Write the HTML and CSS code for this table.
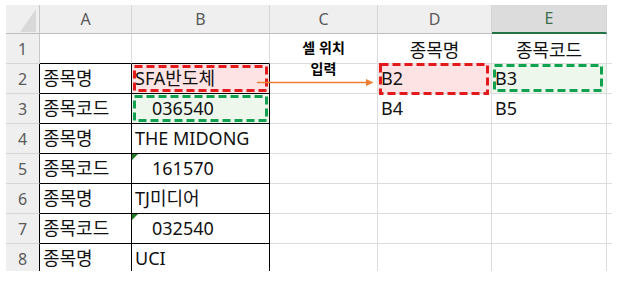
FILE: index.html
```html
<!DOCTYPE html>
<html lang="ko">
<head>
<meta charset="utf-8">
<title>Sheet</title>
<link rel="stylesheet" href="styles.css">
</head>
<body>
<div class="sheet">
  <!-- header row -->
  <div class="corner"><svg width="33" height="28" viewBox="0 0 33 28"><polygon points="30,4 14,27 30,27" fill="#d9d9d9"/></svg></div>
  <div class="hd">A</div>
  <div class="hd">B</div>
  <div class="hd">C</div>
  <div class="hd">D</div>
  <div class="hd sel">E</div>
  <div class="hdtail"></div>

  <!-- row 1 -->
  <div class="rh">1</div>
  <div class="c bt"></div>
  <div class="c bt"></div>
  <div class="c"><div class="note"><div>셀 위치</div><div>입력</div></div></div>
  <div class="c ctr">종목명</div>
  <div class="c ctr">종목코드</div>
  <div class="c tail"></div>

  <!-- row 2 -->
  <div class="rh bk">2</div>
  <div class="c bx">종목명</div>
  <div class="c bx pink">SFA반도체<svg class="dash red b2" width="135" height="27"><rect x="1.5" y="1.5" width="132" height="24"/></svg></div>
  <div class="c"></div>
  <div class="c pink">B2<svg class="dash red d2" width="110" height="32"><rect x="1.5" y="1.5" width="107" height="29"/></svg></div>
  <div class="c mint">B3<svg class="dash green e2" width="110" height="28"><rect x="1.5" y="1.5" width="107" height="25"/></svg></div>
  <div class="c tail"></div>

  <!-- row 3 -->
  <div class="rh bk">3</div>
  <div class="c bx">종목코드</div>
  <div class="c bx mint ind">036540<svg class="dash green b3" width="135" height="27"><rect x="1.5" y="1.5" width="132" height="24"/></svg></div>
  <div class="c"></div>
  <div class="c">B4</div>
  <div class="c">B5</div>
  <div class="c tail"></div>

  <!-- row 4 -->
  <div class="rh bk">4</div>
  <div class="c bx">종목명</div>
  <div class="c bx">THE MIDONG</div>
  <div class="c"></div>
  <div class="c"></div>
  <div class="c"></div>
  <div class="c tail"></div>

  <!-- row 5 -->
  <div class="rh bk">5</div>
  <div class="c bx">종목코드</div>
  <div class="c bx ind flag">161570</div>
  <div class="c"></div>
  <div class="c"></div>
  <div class="c"></div>
  <div class="c tail"></div>

  <!-- row 6 -->
  <div class="rh bk">6</div>
  <div class="c bx">종목명</div>
  <div class="c bx">TJ미디어</div>
  <div class="c"></div>
  <div class="c"></div>
  <div class="c"></div>
  <div class="c tail"></div>

  <!-- row 7 -->
  <div class="rh bk">7</div>
  <div class="c bx">종목코드</div>
  <div class="c bx ind flag">032540</div>
  <div class="c"></div>
  <div class="c"></div>
  <div class="c"></div>
  <div class="c tail"></div>

  <!-- row 8 -->
  <div class="rh bk last">8</div>
  <div class="c bx last">종목명</div>
  <div class="c bx last">UCI</div>
  <div class="c last"></div>
  <div class="c last"></div>
  <div class="c last"></div>
  <div class="c tail last"></div>

  <svg class="arrow" width="118" height="9" viewBox="0 0 118 9">
    <line x1="0" y1="4.5" x2="110" y2="4.5" stroke="#ed7d31" stroke-width="1.5"/>
    <polygon points="109,1 116.5,4.5 109,8" fill="#ed7d31"/>
  </svg>
</div>
</body>
</html>
```
FILE: styles.css
```css
html, body {
  margin: 0;
  padding: 0;
  background: #ffffff;
}

.sheet {
  position: relative;
  margin: 5px 0 0 6px;
  width: 606px;
  height: 266px;
  display: grid;
  grid-template-columns: 34px 92px 138px 108px 114px 115px 5px;
  grid-template-rows: 29px repeat(7, 30px) 27px;
  font-family: "Noto Sans", "Noto Sans CJK KR", sans-serif;
  font-size: 18px;
  color: #111111;
}

.corner {
  background: #efefef;
  border-right: 1px solid #c8c8c8;
  border-bottom: 1px solid #bdbdbd;
  box-sizing: border-box;
}
.corner svg { display: block; }

.hd {
  background: #efefef;
  border-right: 1px solid #d6d6d6;
  border-bottom: 1px solid #bdbdbd;
  box-sizing: border-box;
  text-align: center;
  font-size: 16px;
  line-height: 28px;
  color: #5a5a5a;
}
.hd.sel {
  background: #dcdcdc;
  border-bottom: 2px solid #217346;
  color: #3b6e50;
  line-height: 27px;
}

.rh {
  background: #efefef;
  border-right: 1px solid #c8c8c8;
  border-bottom: 1px solid #d6d6d6;
  box-sizing: border-box;
  text-align: center;
  font-size: 16px;
  line-height: 30px;
  color: #5a5a5a;
}
.rh.bk { border-right-color: #000000; }

.c {
  position: relative;
  box-sizing: border-box;
  border-right: 1px solid #dcdcdc;
  border-bottom: 1px solid #dcdcdc;
  padding: 0 3px;
  line-height: 29px;
  white-space: nowrap;
}
.c.tail { border-right: none; padding: 0; }
.c.bt { border-bottom-color: #000000; }
.c.bx { border-right-color: #000000; border-bottom-color: #000000; }
.last { border-bottom: none !important; }

.ctr { text-align: center; line-height: 33px; }
.ind { padding-left: 20px; }
.pink { background: #fde3e4; }
.mint { background: #eef7eb; }

.flag::before {
  content: "";
  position: absolute;
  left: 0;
  top: 0;
  border-top: 6px solid #1f7a1f;
  border-right: 6px solid transparent;
}

.note {
  font-family: "Noto Sans CJK KR", sans-serif;
  font-weight: 700;
  font-size: 14px;
  line-height: 20.5px;
  text-align: center;
  padding-top: 3px;
  color: #000000;
}

.dash {
  position: absolute;
  overflow: visible;
}
.dash rect {
  fill: none;
  stroke-width: 3;
  stroke-dasharray: 8 4;
}
.dash.red rect { stroke: #e31a1c; }
.dash.green rect { stroke: #12a150; }
.dash.b2 { left: 1px; top: 1px; }
.dash.b3 { left: 1px; top: 1px; }
.dash.d2 { left: 1px; top: -1px; }
.dash.e2 { left: 1px; top: 0; }

.arrow {
  position: absolute;
  left: 251px;
  top: 73px;
}
```
